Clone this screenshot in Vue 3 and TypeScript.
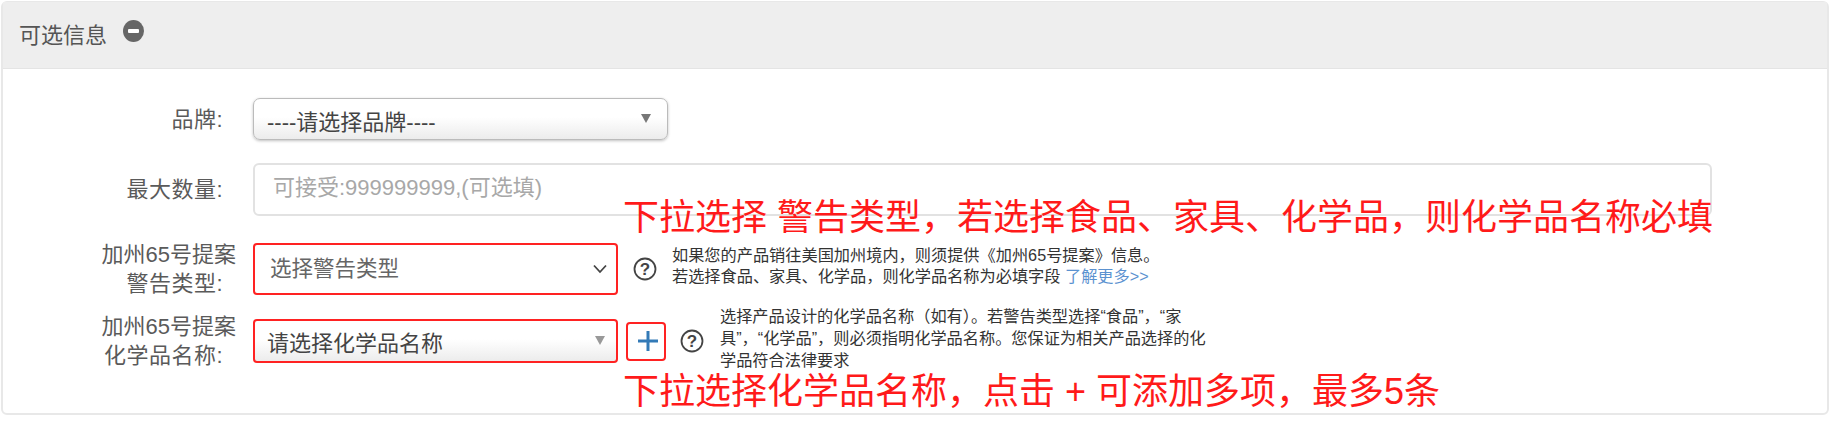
<script setup lang="ts">
const qtyHint: string = '可接受:999999999,(可选填)'
</script>

<template>
  <div class="page">
    <section class="panel">
      <header class="head">
        <h3 class="title">可选信息</h3>
        <span class="collapse"><i></i></span>
      </header>
      <div class="body">
        <div class="row row-brand">
          <label class="label">品牌:</label>
          <div class="pick pick-brand">
            <span>----请选择品牌----</span>
            <b class="tri"></b>
          </div>
        </div>
        <div class="row row-qty">
          <label class="label">最大数量:</label>
          <input class="qty" :placeholder="qtyHint" />
        </div>
        <div class="row row-warn">
          <label class="label two"><span class="wide">加州65号提案</span><br />警告类型:</label>
          <div class="warn">
            <span class="warn-text">选择警告类型</span>
            <svg class="chev" width="16" height="10" viewBox="0 0 16 10"><path d="M2 1.500 8 8l6-6.500" fill="none" stroke="#444" stroke-width="1.800" /></svg>
          </div>
          <svg class="help" width="24" height="24" viewBox="0 0 24 24">
            <circle cx="12" cy="12" r="10.500" fill="none" stroke="#444" stroke-width="1.800" />
            <text x="12" y="17.500" text-anchor="middle" class="q">?</text>
          </svg>
          <p class="tip tip-warn">如果您的产品销往美国加州境内，则须提供《加州65号提案》信息。<br />若选择食品、家具、化学品，则化学品名称为必填字段 <a class="more">了解更多&gt;&gt;</a></p>
        </div>
        <div class="row row-chem">
          <label class="label two"><span class="wide">加州65号提案</span><br />化学品名称:</label>
          <div class="pick pick-chem">
            <span>请选择化学品名称</span>
            <b class="tri"></b>
          </div>
          <button class="add">
            <svg width="22" height="22" viewBox="0 0 22 22"><path d="M11 1v20M1 11h20" stroke="#337ab7" stroke-width="3" /></svg>
          </button>
          <svg class="help" width="24" height="24" viewBox="0 0 24 24">
            <circle cx="12" cy="12" r="10.500" fill="none" stroke="#444" stroke-width="1.800" />
            <text x="12" y="17.500" text-anchor="middle" class="q">?</text>
          </svg>
          <p class="tip tip-chem">选择产品设计的化学品名称（如有）。若警告类型选择“食品”，“家<br />具”，“化学品”，则必须指明化学品名称。您保证为相关产品选择的化<br />学品符合法律要求</p>
        </div>
      </div>
      <div class="note note-a">下拉选择 警告类型，若选择食品、家具、化学品，则化学品名称必填</div>
      <div class="note note-b">下拉选择化学品名称，点击 + 可添加多项，最多5条</div>
    </section>
  </div>
</template>

<style>
html, body { margin: 0; background: #fff; }
</style>

<style scoped>
.page {
  width: 1831px;
  height: 425px;
  padding: 1px 2px 0 1px;
  box-sizing: border-box;
  font-family: "Liberation Sans", "Noto Sans CJK SC", sans-serif;
  overflow: hidden;
}
.panel {
  position: relative;
  height: 414px;
  box-sizing: border-box;
  border: 2px solid #e8e8e8;
  border-top-width: 1px;
  border-radius: 6px;
}
.head {
  height: 67px;
  background: #eee;
  border-bottom: 1px solid #e4e4e4;
  box-sizing: border-box;
  display: flex;
  align-items: center;
  padding: 0 0 4px 16px;
  gap: 16px;
}
.title {
  margin: 0;
  font-size: 22px;
  font-weight: 400;
  color: #555;
}
.collapse {
  width: 21px;
  height: 22px;
  border-radius: 50%;
  background: #666;
  display: flex;
  align-items: center;
  justify-content: center;
  margin-bottom: 4px;
}
.collapse i {
  width: 11px;
  height: 4px;
  background: #fff;
  border-radius: 1px;
}
.body {
  padding-top: 29px;
}
.row {
  display: flex;
  align-items: center;
}
.row-brand { height: 42px; margin-bottom: 23px; }
.row-qty { height: 53px; margin-bottom: 27px; }
.row-warn { height: 52px; margin-bottom: 24px; }
.row-chem { height: 44px; }
.label {
  width: 220px;
  flex: none;
  text-align: right;
  margin-right: 30px;
  font-size: 22px;
  line-height: 29px;
  letter-spacing: 0.5px;
  color: #5a5a5a;
}
.two { white-space: nowrap; }
.wide { margin-right: -13px; letter-spacing: 0; }
.pick {
  box-sizing: border-box;
  display: flex;
  align-items: center;
  justify-content: space-between;
  border-radius: 7px;
  background: linear-gradient(#fff 0%, #fff 45%, #ececec 100%);
  font-size: 22px;
  color: #444;
}
.pick-brand {
  width: 415px;
  height: 42px;
  border: 1px solid #bbb;
  box-shadow: 0 1px 3px rgba(0, 0, 0, 0.25);
  padding: 1px 16px 0 13px;
}
.pick-chem {
  width: 365px;
  height: 44px;
  border: 2px solid #f22;
  border-radius: 4px;
  padding: 0 11px 0 12px;
}
.tri {
  width: 0;
  height: 0;
  border-left: 5px solid transparent;
  border-right: 5px solid transparent;
  border-top: 9px solid #777;
  margin-bottom: 3px;
}
.pick-chem .tri { border-top-color: #999; margin-bottom: 1px; }
.qty {
  box-sizing: border-box;
  width: 1459px;
  height: 53px;
  border: 2px solid #e2e2e2;
  border-radius: 6px;
  padding: 0 18px 4px;
  font: 22px "Liberation Sans", "Noto Sans CJK SC", sans-serif;
  outline: none;
}
.qty::placeholder { color: #a8a8a8; opacity: 1; }
.warn {
  box-sizing: border-box;
  width: 365px;
  height: 52px;
  border: 2px solid #f22;
  border-radius: 4px;
  padding: 0 8px 0 15px;
  display: flex;
  align-items: center;
  justify-content: space-between;
  font-size: 21.500px;
  color: #666;
}
.warn-text { margin-bottom: 6px; }
.help { flex: none; }
.row-warn .help { margin: 0 15px 0 15px; }
.row-chem .help { margin: 0 15px 0 14px; }
.q {
  font: 700 17px "Liberation Sans", sans-serif;
  fill: #444;
}
.tip {
  margin: 0;
  font-size: 16.200px;
  color: #333;
  white-space: nowrap;
}
.tip-warn { line-height: 21px; margin-top: -6px; }
.tip-chem { line-height: 22px; margin: -6px 0 0 1px; }
.more { color: #5b92d0; }
.add {
  box-sizing: border-box;
  width: 40px;
  height: 39px;
  margin-left: 8px;
  padding: 0 0 0 3px;
  background: #fff;
  border: 2px solid #f22;
  border-radius: 4px;
  display: flex;
  align-items: center;
  justify-content: center;
}
.note {
  position: absolute;
  left: 620px;
  color: #ff1a1a;
  font-size: 36px;
  line-height: 50px;
  white-space: nowrap;
}
.note-a { top: 191px; }
.note-b { top: 365px; }
</style>
